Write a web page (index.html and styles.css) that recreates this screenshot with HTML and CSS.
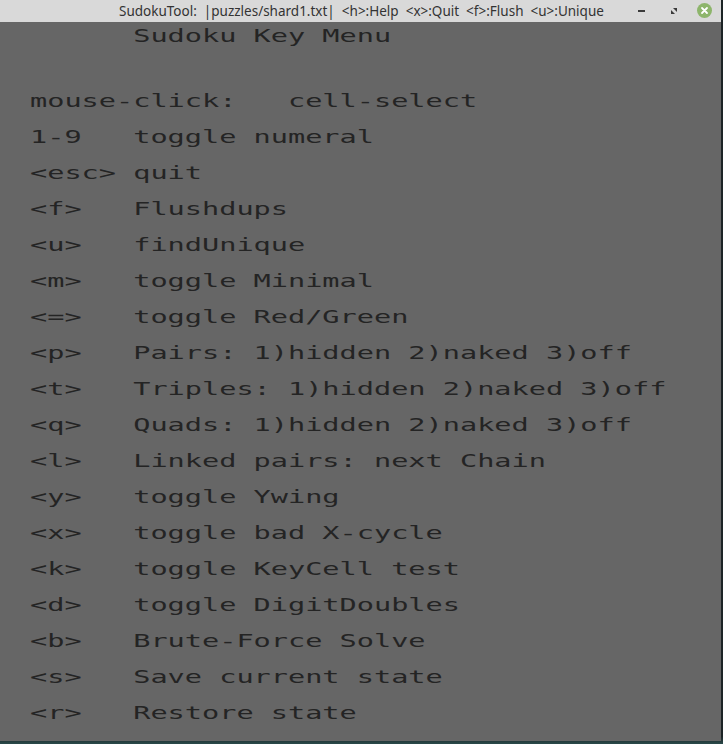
FILE: index.html
```html
<!DOCTYPE html>
<html>
<head>
<meta charset="utf-8">
<link rel="stylesheet" href="styles.css">
</head>
<body>
<div class="window">
  <div class="titlebar">
    <span class="title">SudokuTool:  |puzzles/shard1.txt|  &lt;h&gt;:Help  &lt;x&gt;:Quit  &lt;f&gt;:Flush  &lt;u&gt;:Unique</span>
    <div class="controls">
      <span class="btn-min"></span>
      <svg class="btn-max" width="8" height="8" viewBox="0 0 8 8"><path d="M3 1 H7 V5 Z M1 3 V7 H5 Z" fill="#3a3a3a"/></svg>
      <svg class="btn-close" width="15" height="15" viewBox="0 0 15 15"><circle cx="7.5" cy="7.5" r="7.5" fill="#8db56b"/><path d="M5 5 L10 10 M10 5 L5 10" stroke="#fff" stroke-width="1.8" stroke-linecap="round"/></svg>
    </div>
  </div>
  <div class="content">
    <div class="heading">      Sudoku Key Menu</div>
    <div class="rows">
      <div class="row">mouse-click:   cell-select</div>
      <div class="row">1-9   toggle numeral</div>
      <div class="row">&lt;esc&gt; quit</div>
      <div class="row">&lt;f&gt;   Flushdups</div>
      <div class="row">&lt;u&gt;   findUnique</div>
      <div class="row">&lt;m&gt;   toggle Minimal</div>
      <div class="row">&lt;=&gt;   toggle Red/Green</div>
      <div class="row">&lt;p&gt;   Pairs: 1)hidden 2)naked 3)off</div>
      <div class="row">&lt;t&gt;   Triples: 1)hidden 2)naked 3)off</div>
      <div class="row">&lt;q&gt;   Quads: 1)hidden 2)naked 3)off</div>
      <div class="row">&lt;l&gt;   Linked pairs: next Chain</div>
      <div class="row">&lt;y&gt;   toggle Ywing</div>
      <div class="row">&lt;x&gt;   toggle bad X-cycle</div>
      <div class="row">&lt;k&gt;   toggle KeyCell test</div>
      <div class="row">&lt;d&gt;   toggle DigitDoubles</div>
      <div class="row">&lt;b&gt;   Brute-Force Solve</div>
      <div class="row">&lt;s&gt;   Save current state</div>
      <div class="row">&lt;r&gt;   Restore state</div>
    </div>
  </div>
</div>
</body>
</html>
```
FILE: styles.css
```css
html, body {
  margin: 0;
  padding: 0;
}
body {
  width: 723px;
  height: 744px;
  overflow: hidden;
  background: linear-gradient(180deg, #1c2426 0%, #1c2426 99%, #2a4a4a 100%);
}
.window {
  width: 721px;
  height: 741px;
  background: #666666;
  display: flex;
  flex-direction: column;
  overflow: hidden;
}
.titlebar {
  height: 22px;
  flex: none;
  background: #d9d9d9;
  display: flex;
  align-items: center;
}
.title {
  font-family: "Noto Sans", sans-serif;
  font-size: 13.5px;
  color: #333333;
  white-space: pre;
  padding-left: 119px;
}
.controls {
  margin-left: auto;
  display: flex;
  align-items: center;
  padding-right: 9px;
}
.btn-min {
  width: 7px;
  height: 2px;
  background: #3a3a3a;
  margin-right: 25px;
  margin-top: -1px;
}
.btn-max {
  margin-right: 19px;
}
.btn-close {
  display: block;
  margin-top: -1px;
}
.content {
  padding-left: 30px;
  padding-top: 1px;
  font-family: "DejaVu Sans Mono", monospace;
  font-size: 18px;
  color: #242424;
}
.heading, .row {
  white-space: pre;
  transform: scaleX(1.587);
  transform-origin: left center;
}
.heading {
  line-height: 26px;
  margin-bottom: 34px;
}
.row {
  line-height: 36px;
}
```
